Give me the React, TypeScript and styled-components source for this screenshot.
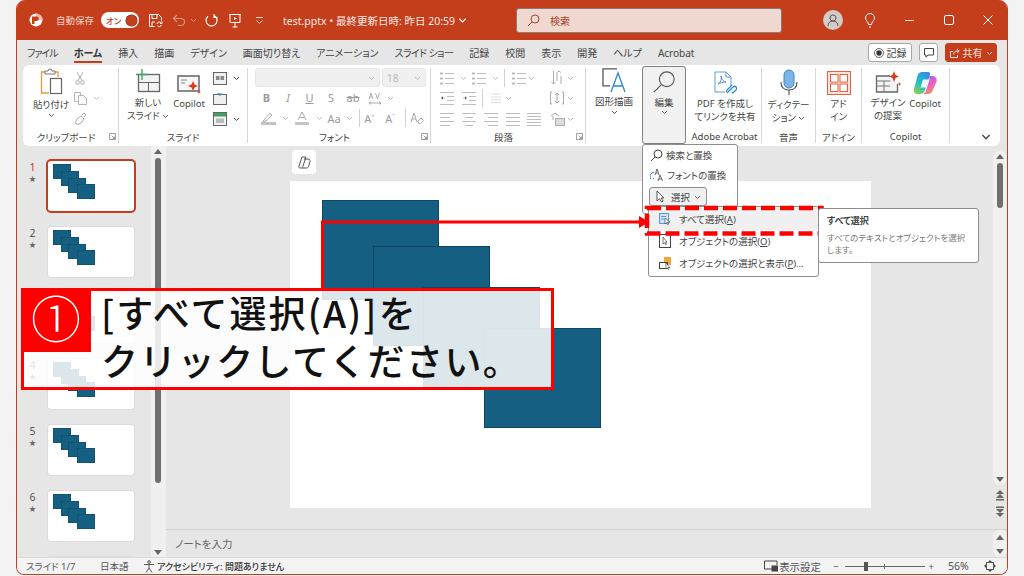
import React from 'react';
import styled, { createGlobalStyle } from 'styled-components';

const Global = createGlobalStyle`
  html, body { margin: 0; padding: 0; background: #f3f3f3; }
  * { box-sizing: border-box; }
  #root { width: 1024px; height: 576px; overflow: hidden; }
`;

const FONT = `"Noto Sans", "Noto Sans CJK JP", sans-serif`;
const ACCENT = '#c43e1c';

const Page = styled.div`
  position: relative; width: 1024px; height: 576px; background: #f3f3f3;
  padding: 0 16px 1px; font-family: ${FONT}; color: #444; overflow: hidden; font-feature-settings: "palt";
`;
const Win = styled.div`
  width: 992px; height: 575px; display: flex; flex-direction: column;
  background: #e6e6e6; border: 1px solid ${ACCENT}; border-top: 0; border-radius: 9px 9px 8px 8px; overflow: hidden;
`;
const TitleBar = styled.header`
  height: 40px; flex: none; background: ${ACCENT}; display: flex; align-items: center; color: #fff; padding-left: 10px;
`;
const TitleSlot = styled.div<{ $w: number; $dim?: boolean }>`
  width: ${p => p.$w}px; flex: none; display: flex; align-items: center; justify-content: center; opacity: ${p => (p.$dim ? 0.45 : 1)};
`;
const AutoSave = styled.span`
  font-size: 9.5px; color: #f4d6cc; width: 45px; margin-left: 11px; flex: none;
`;
const Toggle = styled.div`
  width: 38px; height: 16px; border-radius: 8px; background: #fff; flex: none; display: flex; align-items: center; justify-content: space-between;
  color: ${ACCENT}; font-size: 8.5px; padding: 0 2px 0 5px; font-weight: 500;
`;
const Knob = styled.i`
  width: 11px; height: 11px; border-radius: 50%; background: ${ACCENT}; display: block; box-shadow: 0 0 0 .5px #7a2510;
`;
const DocTitle = styled.div`
  width: 233px; margin-left: 12px; flex: none; font-size: 10.5px; color: #f9e8e2; white-space: nowrap; display: flex; align-items: center; gap: 3px;
`;
const Search = styled.div`
  width: 266px; height: 25px; background: #f0d8d0; border: 1px solid #8c7a73; border-radius: 3px; flex: none; display: flex; align-items: center;
  padding-left: 10px; gap: 10px; color: #a5442a; font-size: 10px;
`;
const TitleRight = styled.div`
  flex: 1; display: flex; align-items: center; padding-left: 41px;
`;
const Avatar = styled.div`
  width: 20px; height: 20px; border-radius: 50%; background: #d2cbc8; display: flex; align-items: center; justify-content: center; flex: none;
`;

const TabRow = styled.nav`
  height: 25px; flex: none; display: flex; align-items: center; padding-left: 10px; gap: 16px; font-size: 10px; color: #444; white-space: nowrap;
`;
const Tab = styled.span<{ $on?: boolean; $ls?: number }>`
  position: relative; font-weight: ${p => (p.$on ? 700 : 400)}; color: ${p => (p.$on ? '#333' : '#444')}; letter-spacing: ${p => p.$ls ?? 0}px;
  &::after { content: ''; display: ${p => (p.$on ? 'block' : 'none')}; position: absolute; left: 0; right: 0; bottom: -3px; height: 2px; background: ${ACCENT}; }
`;
const TabRight = styled.div`
  margin-left: auto; display: flex; gap: 7px; padding-right: 10px; align-items: center;
`;
const HeadBtn = styled.div<{ $w: number; $red?: boolean }>`
  width: ${p => p.$w}px; height: 19px; border-radius: 3px; background: ${p => (p.$red ? ACCENT : '#fff')}; border: 1px solid ${p => (p.$red ? ACCENT : '#a8a8a8')};
  color: ${p => (p.$red ? '#f9e0d8' : '#444')}; display: flex; align-items: center; justify-content: center; gap: 3px; font-size: 10px;
`;

const Ribbon = styled.section`
  height: 81px; flex: none; margin: 0 7px 0 6px; background: #fff; border-radius: 6px; display: flex; font-size: 9.5px;
`;
const Group = styled.div<{ $w: number; $nosep?: boolean }>`
  width: ${p => p.$w}px; flex: none; display: flex; flex-direction: column; margin: 3px 0 3px; border-right: 1px solid ${p => (p.$nosep ? 'transparent' : '#d6d6d6')};
`;
const GroupBody = styled.div<{ $pad?: number; $gap?: number; $top?: number }>`
  flex: 1; display: flex; padding-left: ${p => p.$pad ?? 0}px; gap: ${p => p.$gap ?? 0}px; padding-top: ${p => p.$top ?? 0}px; min-height: 0;
`;
const GroupFoot = styled.div`
  height: 15px; flex: none; display: flex; align-items: center; font-size: 9.5px; color: #444; white-space: nowrap; margin-bottom: -1px;
`;
const FootText = styled.span`
  flex: 1; text-align: center;
`;
const Launcher = styled.svg`
  width: 7px; height: 7px; margin-right: 2px; flex: none;
`;
const BigTool = styled.div<{ $w: number; $top?: number }>`
  width: ${p => p.$w}px; flex: none; display: flex; flex-direction: column; align-items: center; text-align: center; line-height: 12.5px; color: #444; white-space: nowrap;
  padding-top: ${p => p.$top ?? 0}px;
  & > svg { margin-bottom: 3px; flex: none; }
`;
const Col = styled.div<{ $w?: number; $gap?: number; $top?: number }>`
  display: flex; flex-direction: column; gap: ${p => p.$gap ?? 0}px; width: ${p => (p.$w ? p.$w + 'px' : 'auto')}; padding-top: ${p => p.$top ?? 0}px; flex: none;
`;
const Row = styled.div<{ $h?: number }>`
  display: flex; align-items: center; height: ${p => p.$h ?? 21}px;
`;
const Cell = styled.div<{ $w: number; $c?: string }>`
  width: ${p => p.$w}px; flex: none; display: flex; align-items: center; justify-content: center; color: ${p => p.$c ?? '#9a9a9a'}; font-size: 11px; position: relative;
`;
const Sep = styled.i`
  width: 1px; height: 18px; background: #d0d0d0; display: block; flex: none;
`;
const Combo = styled.div<{ $w: number }>`
  width: ${p => p.$w}px; height: 19px; background: #f0f0f0; border: 1px solid #e6e6e6; border-radius: 3px; display: flex; align-items: center; justify-content: flex-end;
  padding: 0 4px; color: #bbb; font-size: 10px; position: relative;
`;
const ComboVal = styled.span`
  margin-right: auto;
`;
const EditBtn = styled.div`
  width: 44px; height: 78px; flex: none; margin-top: -2px; background: #f1f1f1; border: 1px solid #7f7f7f; border-radius: 3px; display: flex; flex-direction: column; align-items: center; padding-top: 3px; line-height: 12px; color: #444;
  & > svg { margin-bottom: 3px; }
`;

const Main = styled.div`
  flex: 1; min-height: 0; display: flex;
`;
const LeftPane = styled.aside`
  width: 148px; flex: none; display: flex; position: relative; overflow: hidden;
`;
const ThumbList = styled.div`
  width: 135px; flex: none; display: flex; flex-direction: column; gap: 16px; padding-top: 15px;
`;
const ThumbRow = styled.div`
  display: flex; height: 50px; flex: none;
`;
const ThumbNum = styled.div<{ $on?: boolean }>`
  width: 30px; flex: none; text-align: center; padding-left: 1px; line-height: 13px; font-size: 10.5px; color: ${p => (p.$on ? ACCENT : '#555')};
`;
const Star = styled.div`
  font-size: 7px; line-height: 9px; color: #666;
`;
const Thumb = styled.div<{ $on?: boolean }>`
  position: relative; width: 86px; height: 50px; background: #fff; border-radius: 3px;
  box-shadow: ${p => (p.$on ? `0 0 0 2px ${ACCENT}` : '0 0 0 1px #dcdcdc')}; flex: none; margin-left: 1px;
`;
const Mini = styled.div<{ $x: number; $y: number }>`
  position: absolute; left: ${p => p.$x}px; top: ${p => p.$y}px; width: 18px; height: 15px; background: #156082; box-shadow: inset 0 0 0 .5px #0f4761;
`;
const ThumbScroll = styled.div`
  margin-left: -1px; width: 14px; flex: none; background: #f0f0f0; display: flex; flex-direction: column; align-items: center; padding-top: 3px; padding-bottom: 2px;
`;
const ScrollThumb = styled.div<{ $h: number; $w?: number }>`
  width: ${p => p.$w ?? 6}px; height: ${p => p.$h}px; background: #6f6f6f; border-radius: 3px; margin-top: 4px; flex: none;
`;
const Arrow = styled.i<{ $down?: boolean; $c?: string }>`
  display: block; width: 0; height: 0; border-left: 4px solid transparent; border-right: 4px solid transparent; flex: none;
  ${p => (p.$down ? `border-top: 5px solid ${p.$c ?? '#666'};` : `border-bottom: 5px solid ${p.$c ?? '#666'};`)}
`;
const Spacer = styled.div`
  flex: 1;
`;
const Editor = styled.div`
  flex: 1; min-width: 0; display: flex; flex-direction: column; border-left: 1px solid #f0f0f0;
`;
const EditTop = styled.div`
  flex: 1; min-height: 0; display: flex;
`;
const Stage = styled.div`
  flex: 1; min-width: 0; padding: 35px 0 0 124px; position: relative;
`;
const CopilotChip = styled.div`
  position: absolute; left: 126px; top: 4px; width: 24px; height: 24px; background: #fff; border-radius: 4px; display: flex; align-items: center; justify-content: center;
`;
const Slide = styled.div`
  position: relative; width: 581px; height: 327px; background: #fff;
`;
const Shape = styled.div<{ $x: number; $y: number }>`
  position: absolute; left: ${p => p.$x}px; top: ${p => p.$y}px; width: 117px; height: 100px; background: #156082; border: 1px solid #0f4761;
`;
const RightScroll = styled.div`
  width: 14px; flex: none; display: flex; flex-direction: column; align-items: center; padding-top: 5px;
`;
const RightTrack = styled.div`
  width: 14px; height: 334px; background: #f0f0f0; border-radius: 7px; display: flex; flex-direction: column; align-items: center; padding: 3px 0;
`;
const PageJump = styled.svg`
  margin-top: 5px; flex: none;
`;
const Notes = styled.div`
  height: 28px; flex: none; border-top: 1px solid #d4d4d4; display: flex; align-items: center; padding-left: 9px; font-size: 10.5px; color: #666;
`;
const NotesScroll = styled.div`
  margin-left: auto; width: 14px; height: 27px; background: #f0f0f0; border-radius: 7px; display: flex; flex-direction: column; align-items: center; justify-content: space-between; padding: 5px 0 3px;
`;
const Status = styled.footer`
  height: 17px; flex: none; background: #f3f3f3; border-top: 1px solid #dcdcdc; display: flex; align-items: center; padding-left: 9px; font-size: 9.5px; color: #555; white-space: nowrap;
`;
const StatusText = styled.span<{ $w?: number; $strong?: boolean; $big?: boolean }>`
  width: ${p => (p.$w ? p.$w + 'px' : 'auto')}; flex: none; font-weight: ${p => (p.$strong ? 500 : 400)}; color: ${p => (p.$strong ? '#333' : '#555')};
  font-size: ${p => (p.$big ? 10.5 : p.$strong ? 9 : 9.5)}px;
`;
const StatusRight = styled.div`
  margin-left: auto; display: flex; align-items: center; padding-right: 11px;
`;
const ZoomTrack = styled.div`
  position: relative; width: 80px; height: 1px; background: #666; margin: 0 4px 0 6px;
  &::before { content: ''; position: absolute; left: 19px; top: -4px; width: 4px; height: 9px; background: #555; }
  &::after { content: ''; position: absolute; left: 39px; top: -2px; width: 1px; height: 5px; background: #666; }
`;

/* overlays */
const Menu = styled.div<{ $x: number; $y: number; $w: number; $h: number }>`
  position: absolute; left: ${p => p.$x}px; top: ${p => p.$y}px; width: ${p => p.$w}px; height: ${p => p.$h}px; background: #fff; border: 1px solid #8e8e8e; border-radius: 3px; font-size: 9.5px; color: #444;
`;
const MainMenu = styled(Menu)`
  display: flex; flex-direction: column; padding: 0 6px 0 7px;
`;
const MenuRow = styled.div<{ $h?: number }>`
  height: ${p => p.$h ?? 20}px; display: flex; align-items: center; gap: 3px; white-space: nowrap;
`;
const SelBtn = styled.div`
  width: 58px; height: 19px; background: #f0f0f0; border: 1px solid #8e8e8e; border-radius: 3px; display: flex; align-items: center; gap: 4px; padding-left: 4px; margin: 2px 0 0 -1px;
`;
const SubMenu = styled(Menu)`
  display: flex; flex-direction: column; padding-top: 1px; font-size: 9.5px;
`;
const SubRow = styled.div<{ $on?: boolean }>`
  height: 22px; display: flex; align-items: center; gap: 8px; padding-left: 10px; background: ${p => (p.$on ? '#f0f0f0' : 'transparent')}; white-space: nowrap;
  u { text-underline-offset: 1px; }
`;
const Tip = styled(Menu)`
  padding: 5px 8px; z-index: 1;
`;
const TipTitle = styled.div`
  font-weight: 700; font-size: 9px; color: #444; line-height: 14px; margin-bottom: 4px;
`;
const TipBody = styled.div`
  font-size: 8.5px; color: #777; line-height: 12px; white-space: nowrap;
`;
const Drawing = styled.svg`
  position: absolute; left: 0; top: 0; width: 1024px; height: 576px; pointer-events: none;
`;
const Callout = styled.div`
  position: absolute; left: 21px; top: 288px; width: 533px; height: 102px; background: rgba(255,255,255,.85); border: 3px solid #f00; color: #111;
  display: flex; flex-direction: column; padding: 0 0 0 77px; font-family: "Noto Sans CJK JP", sans-serif; font-feature-settings: normal; font-weight: 500; font-size: 37px; letter-spacing: 1.4px; line-height: 48px; white-space: nowrap;
`;
const CalloutLine = styled.span<{ $ls?: number }>`
  margin-top: -3.5px; letter-spacing: ${p => p.$ls ?? 1.4}px;
  & + & { margin-top: 0; }
`;
const CalloutBadge = styled.div`
  position: absolute; left: -3px; top: -3px; width: 70px; height: 64px; background: #f00; color: #fff; font-size: 50px; letter-spacing: 0; line-height: 56px; text-align: center; font-weight: 300;
`;

const Chev = ({ c = '#666', s = 6 }: { c?: string; s?: number }) => (
  <svg width={s + 1} height={s} viewBox="0 0 7 6"><path d="M1 2l2.5 2.5L6 2" fill="none" stroke={c} strokeWidth="1" /></svg>
);
const Lines = ({ kind, w = 14, c = '#bdbdbd' }: { kind: 'left' | 'center' | 'right' | 'full' | 'bul' | 'num' | 'out' | 'in' | 'col'; w?: number; c?: string }) => {
  const ys = kind === 'full' ? [2, 5, 8, 11, 14] : [2, 6, 10, 14];
  const span = (i: number): [number, number] => {
    if (kind === 'center') return i % 2 ? [3, 11] : [0, 14];
    if (kind === 'right') return i % 2 ? [4, 14] : [0, 14];
    if (kind === 'left') return i % 2 ? [0, 10] : [0, 14];
    if (kind === 'bul' || kind === 'num') return [5, 14];
    if (kind === 'out' || kind === 'in') return i === 0 || i === 3 ? [0, 14] : [7, 14];
    return [0, 14];
  };
  return (
    <svg width={w} height="16" viewBox="0 0 14 16" stroke={c} strokeWidth="1">
      {ys.slice(0, kind === 'bul' || kind === 'num' ? 3 : ys.length).map((y, i) => {
        const yy = kind === 'bul' || kind === 'num' ? 3 + i * 5 : y;
        const [a, b] = span(i);
        return <path key={y} d={`M${a} ${yy + .5}H${b}`} />;
      })}
      {(kind === 'bul' || kind === 'num') && [3, 8, 13].map(y => <path key={y} d={`M0 ${y + .5}h3`} strokeWidth="2" />)}
      {kind === 'out' && <path d="M5 8H1m2-2L1 8l2 2" />}
      {kind === 'in' && <path d="M1 8h4m-2-2l2 2-2 2" />}
    </svg>
  );
};
const Launch = () => (
  <Launcher viewBox="0 0 7 7"><path d="M.5 6.5v-6h6v6zM2.5 2.5l3 3m0-2v2h-2" fill="none" stroke="#888" strokeWidth=".8" /></Launcher>
);
const SearchIcon = ({ s = 13, c = '#a5442a' }: { s?: number; c?: string }) => (
  <svg width={s} height={s} viewBox="0 0 13 13" fill="none" stroke={c} strokeWidth={s > 20 ? .6 : 1}><circle cx="8" cy="5" r="4" /><path d="M5 8l-4 4" /></svg>
);
const ArrowCursor = ({ s = 13 }: { s?: number }) => (
  <svg width={s} height={s} viewBox="0 0 13 13"><path d="M3 1v10l2.5-2.2L7.5 12l1.6-.8-2-3.2H10z" fill="#fff" stroke="#444" strokeWidth=".9" /></svg>
);
const CopilotLogo = ({ s = 24 }: { s?: number }) => (
  <svg width={s} height={s} viewBox="0 0 24 24">
    <defs>
      <linearGradient id="cpa" x1="0.7" y1="0" x2="0.2" y2="1"><stop offset="0" stopColor="#2a8fe8" /><stop offset=".55" stopColor="#22c3c0" /><stop offset="1" stopColor="#8fd14f" /></linearGradient>
      <linearGradient id="cpb" x1="0.2" y1="0" x2="0.8" y2="1"><stop offset="0" stopColor="#8a6cf0" /><stop offset=".5" stopColor="#e85fc8" /><stop offset="1" stopColor="#f7a13c" /></linearGradient>
    </defs>
    <path d="M9 1h6c1.500 0 2.500 1 2 2.500L12 19c-.8 2.500-2.500 4-5 4H4.500C1.500 23 0 20.500 1 17.500L4.500 5C5.300 2.500 7 1 9 1z" fill="url(#cpa)" />
    <path d="M13 5h6.500c3 0 5 2.500 4 5.500L20 19c-.8 2.500-2.500 4-5 4H9c2 0 3.500-1.500 4-3.500l3.500-11C16.800 6.500 15 5 13 5z" fill="url(#cpb)" />
    <path d="M10 8.500h5.500L13 16.500H7.500z" fill="#fff" opacity=".92" />
  </svg>
);

const Squares = () => (
  <>
    <Mini $x={5} $y={3} /><Mini $x={13} $y={10} /><Mini $x={20} $y={17} /><Mini $x={29} $y={23} />
  </>
);
const slideShapes = [{ x: 32, y: 19 }, { x: 83, y: 65 }, { x: 133, y: 106 }, { x: 194, y: 147 }];
const tabs: { t: string; ls?: number }[] = [
  { t: 'ファイル', ls: -1 }, { t: 'ホーム' }, { t: '挿入' }, { t: '描画' }, { t: 'デザイン' }, { t: '画面切り替え' }, { t: 'アニメーション' },
  { t: 'スライド ショー', ls: -.6 }, { t: '記録' }, { t: '校閲' }, { t: '表示' }, { t: '開発' }, { t: 'ヘルプ' }, { t: 'Acrobat' },
];

export default function App() {
  return (
    <Page>
      <Global />
      <Win>
        <TitleBar>
          <TitleSlot $w={18}>
            <svg width="16" height="16" viewBox="0 0 16 16"><circle cx="8" cy="8" r="6.5" fill="#fff" /><path d="M8 1.5a6.5 6.5 0 0 1 6.5 6.5H8z" fill="#f0b9a8" /><path d="M4 4.5h4.5a2.2 2.2 0 0 1 0 4.5H6.5v3H4z" fill={ACCENT} /></svg>
          </TitleSlot>
          <AutoSave>自動保存</AutoSave>
          <Toggle>オン<Knob /></Toggle>
          <TitleSlot $w={32}>
            <svg width="15" height="15" viewBox="0 0 15 15" fill="none" stroke="#fff"><path d="M1.5 1.5h9l3 3v3M1.5 1.5v12h5M4 1.5v4h5v-4M4 13v-4h3" /><path d="M9 11a2.5 2.5 0 0 1 4-1.5m1-1v2h-2M13.500 12a2.500 2.500 0 0 1-4 1" /></svg>
          </TitleSlot>
          <TitleSlot $w={16} $dim>
            <svg width="14" height="14" viewBox="0 0 14 14" fill="none" stroke="#fff" strokeWidth="1.1"><path d="M2 5.500h7a3.500 3.500 0 0 1 0 7H6M5 2L1.500 5.500 5 9" /></svg>
          </TitleSlot>
          <TitleSlot $w={12} $dim><Chev c="#fff" /></TitleSlot>
          <TitleSlot $w={24}>
            <svg width="15" height="15" viewBox="0 0 15 15" fill="none" stroke="#fff" strokeWidth="1.2"><path d="M5 2.500a5.500 5.500 0 1 0 6 .8M5 1v3.500H1.500" transform="matrix(-1 0 0 1 15 0)" /></svg>
          </TitleSlot>
          <TitleSlot $w={24}>
            <svg width="14" height="15" viewBox="0 0 14 15" fill="none" stroke="#fff"><path d="M1 1.500h12M2 1.500v8h10v-8M7 9.500V14M4.500 14h5" /><path d="M6 4l3 1.500L6 7z" fill="#fff" stroke="none" /></svg>
          </TitleSlot>
          <TitleSlot $w={24}>
            <svg width="9" height="9" viewBox="0 0 9 9" fill="none" stroke="#f4d6cc"><path d="M1 1.500h7M1.500 4.500L4.500 7.500 7.500 4.500" /></svg>
          </TitleSlot>
          <DocTitle>test.pptx&nbsp;• 最終更新日時: 昨日 20:59 <Chev c="#fff" s={8} /></DocTitle>
          <Search><SearchIcon />検索</Search>
          <TitleRight>
            <Avatar>
              <svg width="14" height="14" viewBox="0 0 14 14" fill="none" stroke="#555"><circle cx="7" cy="5" r="3" /><path d="M2 13c0-3 2-5 5-5s5 2 5 5" /></svg>
            </Avatar>
            <TitleSlot $w={54}>
              <svg width="12" height="15" viewBox="0 0 12 15" fill="none" stroke="#fff"><path d="M4.500 11.500C4.500 9 1.500 7.500 1.500 5a4.500 4.500 0 0 1 9 0c0 2.500-3 4-3 6.500zM5 14h2" /></svg>
            </TitleSlot>
            <TitleSlot $w={24}>
              <svg width="9" height="9" viewBox="0 0 9 9" stroke="#f6d9d0"><path d="M0 4.500h9" /></svg>
            </TitleSlot>
            <TitleSlot $w={56}>
              <svg width="10" height="10" viewBox="0 0 10 10" fill="none" stroke="#fff"><rect x=".5" y=".5" width="9" height="9" rx="1.500" /></svg>
            </TitleSlot>
            <TitleSlot $w={22}>
              <svg width="10" height="10" viewBox="0 0 10 10" stroke="#fff"><path d="M.5.500l9 9m0-9l-9 9" /></svg>
            </TitleSlot>
          </TitleRight>
        </TitleBar>

        <TabRow>
          {tabs.map(({ t, ls }) => <Tab key={t} $on={t === 'ホーム'} $ls={ls}>{t}</Tab>)}
          <TabRight>
            <HeadBtn $w={44}>
              <svg width="10" height="10" viewBox="0 0 10 10"><circle cx="5" cy="5" r="4.500" fill="none" stroke="#444" strokeWidth=".8" /><circle cx="5" cy="5" r="2.700" fill="#333" /></svg>記録
            </HeadBtn>
            <HeadBtn $w={19}>
              <svg width="10" height="10" viewBox="0 0 10 10" fill="none" stroke="#444"><path d="M.5.500h9v6.500H4L2 9.300V7H.5z" /></svg>
            </HeadBtn>
            <HeadBtn $w={52} $red>
              <svg width="10" height="10" viewBox="0 0 10 10" fill="none" stroke="#f9e0d8"><path d="M3 3.500H.5v6h7V7M3.500 6.500c0-2 1.500-3.500 3.500-3.500h2M7 .8L9.200 3 7 5.200" /></svg>共有 <Chev c="#f9e0d8" />
            </HeadBtn>
          </TabRight>
        </TabRow>

        <Ribbon>
          <Group $w={96}>
            <GroupBody $pad={10}>
              <BigTool $w={36}>
                <svg width="27" height="28" viewBox="0 0 27 28" fill="none">
                  <path d="M8 4H3.500v21H11" stroke="#e69b3c" strokeWidth="1.300" /><path d="M16 4h4v5" stroke="#e69b3c" strokeWidth="1.300" />
                  <path d="M7 5V3h3a2 2 0 0 1 4 0h3v3H7z" fill="#fff" stroke="#777" />
                  <rect x="12.500" y="10.500" width="11" height="15" fill="#fff" stroke="#666" strokeWidth="1.200" />
                </svg>
                <span>貼り付け</span>
                <Chev />
              </BigTool>
              <Col $w={32}>
                <Row>
                  <Cell $w={22} $c="#aaa"><svg width="10" height="13" viewBox="0 0 10 13" fill="none" stroke="#aaa"><path d="M2 .5l5 8M8 .5l-5 8" /><circle cx="2.500" cy="10.500" r="1.800" /><circle cx="7.500" cy="10.500" r="1.800" /></svg></Cell>
                </Row>
                <Row>
                  <Cell $w={22}><svg width="13" height="13" viewBox="0 0 13 13" fill="none" stroke="#b4b4b4"><path d="M4 9.500H.5v-9h6V3" /><path d="M4.500 3.500h5l3 3v6h-8z" /></svg></Cell>
                  <Cell $w={10}><Chev c="#bbb" /></Cell>
                </Row>
                <Row>
                  <Cell $w={22}><svg width="13" height="13" viewBox="0 0 13 13" fill="none" stroke="#aaa"><path d="M1 11l2-4 4-3 3 3-3 4-3 1.500zM8 3l2-2 2 2-2 2" /></svg></Cell>
                </Row>
              </Col>
            </GroupBody>
            <GroupFoot><FootText>クリップボード</FootText><Launch /></GroupFoot>
          </Group>

          <Group $w={129}>
            <GroupBody $pad={7}>
              <BigTool $w={44} $top={1}>
                <svg width="26" height="25" viewBox="0 0 26 25" fill="none">
                  <rect x="3.500" y="5.500" width="21" height="17" fill="#f3f3f3" stroke="#666" strokeWidth="1.300" /><path d="M3 13.500h21M13.500 13.500v9" stroke="#666" />
                  <path d="M7 0v11M1 5.500h12" stroke="#3ea15f" strokeWidth="1.300" />
                </svg>
                <span>新しい</span>
                <span>スライド <Chev /></span>
              </BigTool>
              <BigTool $w={38} $top={5}>
                <svg width="24" height="22" viewBox="0 0 24 22" fill="none">
                  <rect x="1" y="3" width="21" height="15" fill="#f7f7f7" stroke="#666" strokeWidth="1.500" /><path d="M4 7h6M4 10h4" stroke="#888" />
                  <path d="M16 8l1.500 3.500L21 13l-3.500 1.500L16 18l-1.500-3.500L11 13l3.500-1.500zM22 17l.7 1.500 1.300.5-1.300.5L22 21l-.7-1.500L20 19l1.300-.5z" fill="#d83b1d" />
                </svg>
                <span>Copilot</span>
              </BigTool>
              <Col $w={33}>
                <Row><Cell $w={24}><svg width="14" height="13" viewBox="0 0 14 13"><rect x=".5" y=".5" width="13" height="12" fill="#f0f0f0" stroke="#666" /><rect x="3" y="4" width="3.500" height="4" fill="#888" /><rect x="7.500" y="4" width="3.500" height="4" fill="#888" /></svg></Cell><Cell $w={8}><Chev c="#444" /></Cell></Row>
                <Row><Cell $w={24}><svg width="14" height="13" viewBox="0 0 14 13" fill="none"><rect x=".5" y="2.500" width="13" height="10" fill="#f0f0f0" stroke="#666" /><path d="M3 3a3 3 0 0 1 5 0m0-2v2H6" stroke="#2e86d6" /></svg></Cell></Row>
                <Row><Cell $w={24}><svg width="14" height="14" viewBox="0 0 14 14"><rect x=".5" y=".5" width="13" height="13" fill="#f0f0f0" stroke="#666" /><rect x="1" y="1" width="12" height="3.500" fill="#3ea15f" /><rect x="3" y="6.500" width="8" height="4.500" fill="#bbb" /></svg></Cell><Cell $w={8}><Chev c="#444" /></Cell></Row>
              </Col>
            </GroupBody>
            <GroupFoot><FootText>スライド</FootText></GroupFoot>
          </Group>

          <Group $w={183}>
            <GroupBody $pad={7}>
              <Col>
                <Row $h={20}>
                  <Combo $w={125}><Chev c="#bbb" /></Combo>
                  <Cell $w={2} />
                  <Combo $w={44}><ComboVal>18</ComboVal><Chev c="#bbb" /></Combo>
                </Row>
                <Row $h={21}>
                  <Cell $w={1} />
                  <Cell $w={21}><b>B</b></Cell><Cell $w={22}><i>I</i></Cell><Cell $w={21}><u>U</u></Cell><Cell $w={22}>S</Cell>
                  <Cell $w={22}><s>ab</s></Cell><Cell $w={21}><svg width="14" height="14" viewBox="0 0 14 14" fill="none" stroke="#9a9a9a"><path d="M1 8l2-6 2 6M2 6h2M7.500 2l2 6 2-6M1 12h12M3 10.500L1 12l2 1.500M11 10.500l2 1.500-2 1.500" strokeWidth=".8" /></svg></Cell><Cell $w={10}><Chev c="#bbb" /></Cell>
                </Row>
                <Row $h={22}>
                  <Cell $w={1} />
                  <Cell $w={24}><svg width="15" height="14" viewBox="0 0 15 14" fill="none"><path d="M3 9l6-7 2 2-6 6-3 .5z" stroke="#aaa" /><rect x="0" y="11" width="15" height="3" fill="#c4c4c4" /></svg></Cell>
                  <Cell $w={10}><Chev c="#bbb" /></Cell>
                  <Cell $w={24}><svg width="14" height="14" viewBox="0 0 14 14" fill="none"><path d="M3 9l4-8 4 8M4.500 6.500h5" stroke="#aaa" /><rect y="11" width="14" height="3" fill="#c4c4c4" /></svg></Cell>
                  <Cell $w={10}><Chev c="#bbb" /></Cell>
                  <Cell $w={20}>Aa</Cell>
                  <Cell $w={10}><Chev c="#bbb" /></Cell>
                  <Cell $w={5} /><Sep />
                  <Cell $w={19}><span>A<sup style={{ fontSize: 6 }}>^</sup></span></Cell>
                  <Cell $w={22}><span>A<sup style={{ fontSize: 6 }}>ˇ</sup></span></Cell>
                  <Cell $w={4} /><Sep />
                  <Cell $w={22}><svg width="14" height="14" viewBox="0 0 14 14" fill="none" stroke="#aaa"><path d="M1 11l3-9 3 9M2 8h4M8 10l3-3 2.500 2.500-3 3H8.500z" /></svg></Cell>
                </Row>
              </Col>
            </GroupBody>
            <GroupFoot><FootText>フォント</FootText><Launch /></GroupFoot>
          </Group>

          <Group $w={155}>
            <GroupBody $pad={9}>
              <Col $w={145}>
                <Row $h={20}>
                  <Cell $w={14}><Lines kind="bul" /></Cell><Cell $w={18}><Chev c="#bbb" /></Cell>
                  <Cell $w={14}><Lines kind="num" /></Cell><Cell $w={18}><Chev c="#bbb" /></Cell>
                  <Sep />
                  <Cell $w={6} />
                  <Cell $w={16}><Lines kind="bul" /></Cell><Cell $w={8}><Chev c="#bbb" /></Cell>
                  <Cell $w={14} />
                  <Cell $w={16}><svg width="13" height="15" viewBox="0 0 13 15" fill="none" stroke="#aaa"><path d="M2.500 1v13M.5 12l2 2 2-2M6 11V2.500M6 2.500L8 1l2 1.500M10 14V6" /></svg></Cell>
                  <Cell $w={10}><Chev c="#bbb" /></Cell>
                </Row>
                <Row $h={22}>
                  <Cell $w={14}><Lines kind="out" /></Cell><Cell $w={8} />
                  <Cell $w={14}><Lines kind="in" /></Cell><Cell $w={6} />
                  <Sep />
                  <Cell $w={6} />
                  <Cell $w={14}><Lines kind="col" w={10} c="#d4d4d4" /></Cell><Cell $w={10}><Chev c="#bbb" /></Cell>
                  <Cell $w={36} />
                  <Cell $w={16}><svg width="14" height="14" viewBox="0 0 14 14" fill="none" stroke="#aaa"><path d="M2 1H.5v12H2M12 1h1.500v12H12M7 2v10M5 4l2-2 2 2M5 10l2 2 2-2" /></svg></Cell>
                  <Cell $w={10}><Chev c="#bbb" /></Cell>
                </Row>
                <Row $h={20}>
                  <Cell $w={14}><Lines kind="left" /></Cell><Cell $w={8} />
                  <Cell $w={14}><Lines kind="center" /></Cell><Cell $w={8} />
                  <Cell $w={14}><Lines kind="right" /></Cell><Cell $w={8} />
                  <Cell $w={14}><Lines kind="col" /></Cell><Cell $w={7} />
                  <Cell $w={14}><Lines kind="full" /></Cell><Cell $w={8} />
                  <Cell $w={16}><svg width="15" height="14" viewBox="0 0 15 14" fill="none" stroke="#aaa"><path d="M1 4l4-3 4 3M3 4v4" /><rect x="5.500" y="6.500" width="9" height="7" fill="#ddd" /></svg></Cell>
                  <Cell $w={10}><Chev c="#bbb" /></Cell>
                </Row>
              </Col>
            </GroupBody>
            <GroupFoot><FootText>段落</FootText><Launch /></GroupFoot>
          </Group>

          <Group $w={56} $nosep>
            <GroupBody>
              <BigTool $w={56}>
                <svg width="25" height="25" viewBox="0 0 25 25" fill="none">
                  <path d="M15 .8H1v17h7" stroke="#555" strokeWidth="1.300" /><path d="M9 24L16 5l7 19M11.500 18h9" stroke="#2e86d6" strokeWidth="1.300" />
                </svg>
                <span>図形描画</span>
                <Chev />
              </BigTool>
            </GroupBody>
          </Group>
          <Group $w={46} $nosep>
            <GroupBody>
              <EditBtn>
                <SearchIcon s={24} c="#555" />
                <span>編集</span>
                <Chev />
              </EditBtn>
            </GroupBody>
          </Group>
          <Group $w={74}>
            <GroupBody $top={3}>
              <BigTool $w={74}>
                <svg width="24" height="24" viewBox="0 0 24 24" fill="none">
                  <path d="M2 1h11l5 5v9M2 1v20h10M13 1v5h5" stroke="#5b9bd5" /><path d="M5 13c2-1 4-4 3-8 1 4 3 6 5 6-3 0-6 1-8 2z" stroke="#2e7cc4" strokeWidth=".8" />
                  <path d="M14 22l6-6a2 2 0 0 1 3 3l-3 3-1-1M19 14l-5 5-1 2" stroke="#2e86d6" strokeWidth="1.200" />
                </svg>
                <span>PDF を作成し</span>
                <span>てリンクを共有</span>
              </BigTool>
            </GroupBody>
            <GroupFoot><FootText>Adobe Acrobat</FootText></GroupFoot>
          </Group>
          <Group $w={54}>
            <GroupBody $top={1}>
              <BigTool $w={53}>
                <svg width="20" height="27" viewBox="0 0 20 27" fill="none">
                  <rect x="5" y="1" width="10" height="18" rx="5" fill="#7cb5e6" stroke="#3f83c4" /><path d="M2 13c0 5 3 8 8 8s8-3 8-8M10 21v5" stroke="#555" strokeWidth="1.200" />
                </svg>
                <span>ディクテー</span>
                <span>ション <Chev /></span>
              </BigTool>
            </GroupBody>
            <GroupFoot><FootText>音声</FootText></GroupFoot>
          </Group>
          <Group $w={46}>
            <GroupBody $top={3}>
              <BigTool $w={45}>
                <svg width="24" height="24" viewBox="0 0 24 24" fill="#fff" stroke="#e8613c">
                  <rect x=".5" y=".5" width="23" height="23" fill="#fbe3db" /><rect x="3.500" y="3.500" width="7.500" height="7.500" /><rect x="13" y="3.500" width="7.500" height="7.500" /><rect x="3.500" y="13" width="7.500" height="7.500" /><rect x="13" y="13" width="7.500" height="7.500" />
                </svg>
                <span>アド</span>
                <span>イン</span>
              </BigTool>
            </GroupBody>
            <GroupFoot><FootText>アドイン</FootText></GroupFoot>
          </Group>
          <Group $w={88}>
            <GroupBody $pad={2} $top={3}>
              <BigTool $w={48}>
                <svg width="26" height="23" viewBox="0 0 26 23" fill="none">
                  <path d="M15 5H1.500v16h21V13" stroke="#666" strokeWidth="1.300" fill="#f4f4f4" /><path d="M1.500 10h14M9 10v11M1 15h14" stroke="#777" />
                  <path d="M19 0l1.500 4L24 5.500 20.500 7 19 11l-1.500-4L14 5.500 17.500 4zM24.500 11l.6 1.400 1 .6-1 .6-.6 1.400-.6-1.400-1-.6 1-.6z" fill="#d83b1d" />
                </svg>
                <span>デザイン</span>
                <span>の提案</span>
              </BigTool>
              <BigTool $w={26}>
                <CopilotLogo />
                <span>Copilot</span>
              </BigTool>
            </GroupBody>
            <GroupFoot><FootText>Copilot</FootText></GroupFoot>
          </Group>
          <Group $w={49} $nosep>
            <GroupBody />
            <GroupFoot><FootText /><Chev c="#444" s={9} /><Cell $w={7} /></GroupFoot>
          </Group>
        </Ribbon>

        <Main>
          <LeftPane>
            <ThumbList>
              {[1, 2, 3, 4, 5, 6, 7].map(n => (
                <ThumbRow key={n}>
                  <ThumbNum $on={n === 1}>{n}<Star>★</Star></ThumbNum>
                  <Thumb $on={n === 1}><Squares /></Thumb>
                </ThumbRow>
              ))}
            </ThumbList>
            <ThumbScroll>
              <Arrow />
              <ScrollThumb $h={325} />
              <Spacer />
              <Arrow $down />
            </ThumbScroll>
          </LeftPane>
          <Editor>
            <EditTop>
              <Stage>
                <CopilotChip><CopilotMono /></CopilotChip>
                <Slide>
                  {slideShapes.map(s => <Shape key={s.x} $x={s.x} $y={s.y} />)}
                </Slide>
              </Stage>
              <RightScroll>
                <RightTrack>
                  <Arrow />
                  <ScrollThumb $h={45} />
                  <Spacer />
                  <Arrow $down />
                </RightTrack>
                <PageJump width="10" height="11" viewBox="0 0 10 11" fill="#666"><path d="M5 0l4 4H1zM5 4l4 4H1zM1 9h8v1.500H1z" /></PageJump>
                <PageJump width="10" height="11" viewBox="0 0 10 11" fill="#666"><path d="M1 .5h8V2H1zM1 3h8L5 7zM1 7h8l-4 4z" /></PageJump>
              </RightScroll>
            </EditTop>
            <Notes>
              ノートを入力
              <NotesScroll><Arrow /><Arrow $down /></NotesScroll>
            </Notes>
          </Editor>
        </Main>

        <Status>
          <StatusText $w={74}>スライド 1/7</StatusText>
          <StatusText $w={43}>日本語</StatusText>
          <svg width="13" height="13" viewBox="0 0 13 13" fill="none" stroke="#555" style={{ marginRight: 1 }}><circle cx="6" cy="2" r="1.300" /><path d="M1 4.500h10M6 4.500V8M6 8l-3 4.500M6 8l3 4.500" /></svg>
          <StatusText $strong>アクセシビリティ: 問題ありません</StatusText>
          <StatusRight>
            <svg width="14" height="12" viewBox="0 0 14 12" fill="none" stroke="#444" style={{ marginRight: 1 }}><path d="M8 9H.5V1H13v4" /><rect x="8" y="6" width="5.500" height="5" fill="#444" /></svg>
            <StatusText $w={54} $big>表示設定</StatusText>
            <StatusText>−</StatusText>
            <ZoomTrack />
            <StatusText>+</StatusText>
            <StatusText $w={14} />
            <StatusText $w={36} $big>56%</StatusText>
            <svg width="12" height="12" viewBox="0 0 12 12" fill="#555"><rect x="2.500" y="2.500" width="7" height="7" fill="none" stroke="#555" /><path d="M6 0l2 2H4zM6 12l2-2H4zM0 6l2-2v4zM12 6l-2-2v4z" /></svg>
          </StatusRight>
        </Status>
      </Win>

      <Callout>
        <CalloutBadge>①</CalloutBadge>
        <CalloutLine $ls={2.1}>[すべて選択(A)]を</CalloutLine>
        <CalloutLine>クリックしてください。</CalloutLine>
      </Callout>

      <MainMenu $x={642} $y={144} $w={96} $h={70}>
        <MenuRow><SearchIcon s={13} c="#444" />検索と置換</MenuRow>
        <MenuRow>
          <svg width="14" height="14" viewBox="0 0 14 14" fill="none"><path d="M1 11a4 4 0 0 1 1-6l2-1M4 10l-1 1" stroke="#2e86d6" /><path d="M5 7l2-6 2 6M6 5h2M8 13l2-6 2.500 6M9 11h3" stroke="#444" strokeWidth=".8" /></svg>
          フォントの置換
        </MenuRow>
        <SelBtn><ArrowCursor />選択 <Chev /></SelBtn>
      </MainMenu>

      <SubMenu $x={648} $y={206} $w={171} $h={71}>
        <SubRow $on>
          <svg width="12" height="12" viewBox="0 0 12 12" fill="none"><rect x=".5" y=".5" width="9" height="10" fill="#cfe4f6" stroke="#5b9bd5" /><path d="M2 3.500h5M2 6h3" stroke="#5b9bd5" /><path d="M6 5v6l1.500-1.300 1 2 1-.5-1-2H11z" fill="#fff" stroke="#444" strokeWidth=".7" /></svg>
          <span>すべて選択(<u>A</u>)</span>
        </SubRow>
        <SubRow>
          <svg width="12" height="14" viewBox="0 0 12 14" fill="none"><rect x=".5" y=".5" width="11" height="13" fill="#fff" stroke="#444" /><path d="M4 3v7l1.500-1.300 1 2 1-.5-1-2H8z" fill="#fff" stroke="#444" strokeWidth=".7" /></svg>
          <span>オブジェクトの選択(<u>O</u>)</span>
        </SubRow>
        <SubRow>
          <svg width="12" height="13" viewBox="0 0 12 13" fill="none"><rect x="5" y="0" width="7" height="8" fill="#f0a83c" /><rect x=".5" y="5.500" width="8" height="6" fill="#fff" stroke="#444" /><path d="M7 6v6l1.300-1 1 1.500.8-.4-.8-1.600H11z" fill="#fff" stroke="#444" strokeWidth=".7" /></svg>
          <span>オブジェクトの選択と表示(<u>P</u>)...</span>
        </SubRow>
      </SubMenu>

      <Tip $x={818} $y={208} $w={161} $h={55}>
        <TipTitle>すべて選択</TipTitle>
        <TipBody>すべてのテキストとオブジェクトを選択<br />します。</TipBody>
      </Tip>

      <Drawing viewBox="0 0 1024 576">
        <path d="M322.500 288V222H640" fill="none" stroke="#f00" strokeWidth="3" />
        <path d="M639 216l10 6-10 6z" fill="#f00" />
        <rect x="647" y="208" width="174.500" height="25.500" fill="none" stroke="#f00" strokeWidth="4.500" strokeDasharray="14 5" />
      </Drawing>
    </Page>
  );
}

function CopilotMono() {
  return (
    <svg width="13" height="13" viewBox="0 0 13 13" fill="none" stroke="#444" strokeWidth=".9">
      <path d="M4 1h4l-3 9c-.3 1-1 2-2 2H2C1 12 .5 11 1 10zM6 3h4c1.500 0 2.500 1 2 2.500l-1.500 5c-.3 1-1 1.500-2 1.500H4" />
    </svg>
  );
}
